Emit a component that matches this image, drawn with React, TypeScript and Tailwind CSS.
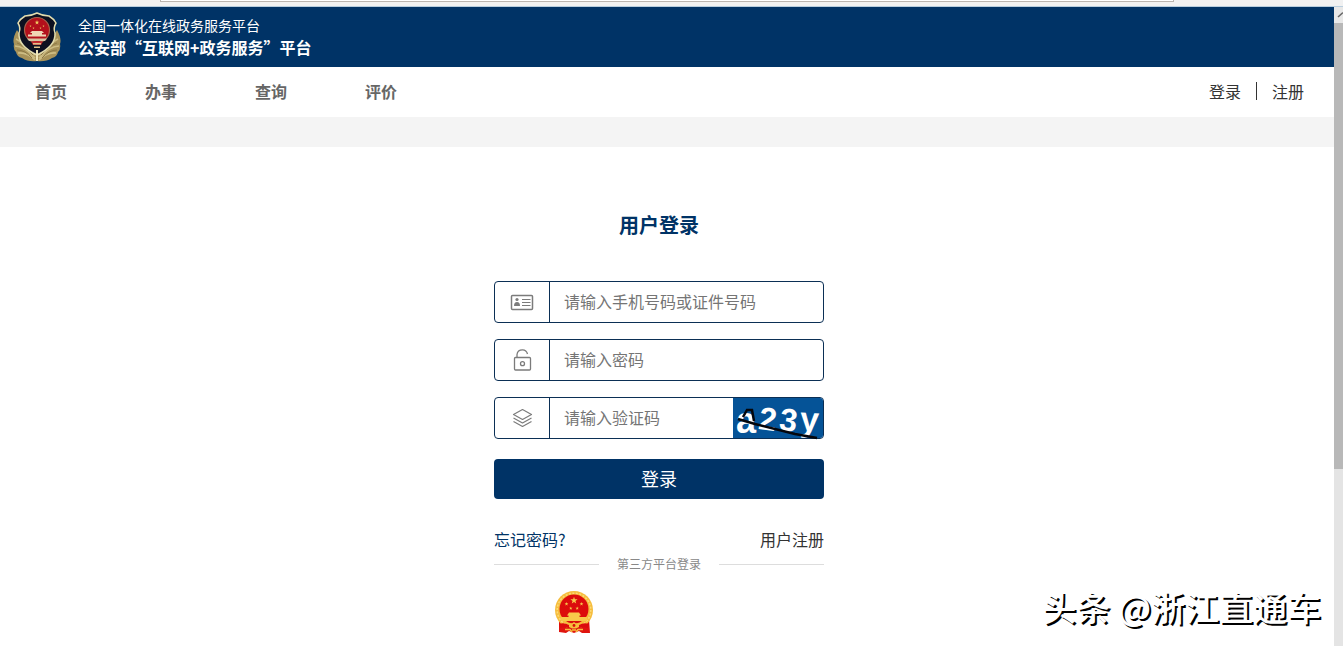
import type { ReactNode } from "react";

const navItems = ["首页", "办事", "查询", "评价"];

const STAR = "M0 -1 L0.24 -0.32 L0.95 -0.31 L0.38 0.12 L0.59 0.81 L0 0.4 L-0.59 0.81 L-0.38 0.12 L-0.95 -0.31 L-0.24 -0.32 Z";

const PoliceBadge = () => (
  <svg viewBox="0 0 48 50" className="h-[50px] w-12 shrink-0" aria-hidden="true">
    {/* Pine branches */}
    <path
      d="M4 18 Q-1 27 1 32 Q0 37 3 40 Q4 45 9 46 Q15 50 24 49 Q33 50 39 46 Q44 45 45 40 Q48 37 47 32 Q49 27 44 18 L38 28 L24 42 L10 28 Z"
      fill="#a8935a"
    />
    <path
      d="M3 27 Q11 31 22 43 M2 34 Q11 34 22 46 M5 41 Q14 40 22 48 M45 27 Q37 31 26 43 M46 34 Q37 34 26 46 M43 41 Q34 40 26 48"
      stroke="#cdbd84"
      strokeWidth="1.6"
      fill="none"
    />
    <path
      d="M4 31 Q11 33 20 43 M4 38 Q12 38 19 46 M44 31 Q37 33 28 43 M44 38 Q36 38 29 46"
      stroke="#8c7946"
      strokeWidth="1"
      fill="none"
    />
    {/* Shield */}
    <path
      d="M24 1 Q30 4 36 4 Q41 7 43 11 Q40 16 42 21 Q43 34 24 43 Q5 34 6 21 Q8 16 5 11 Q7 7 12 4 Q18 4 24 1 Z"
      fill="#0d1020"
      stroke="#e2dcae"
      strokeWidth="1.5"
    />
    <circle cx="24" cy="18" r="12.5" fill="#b3101c" stroke="#a9634a" strokeWidth="1.2" />
    <g fill="#f1ce62">
      <path d={STAR} transform="translate(24 10.5) scale(2.4)" />
      <path d={STAR} transform="translate(17.5 14) scale(1.1)" />
      <path d={STAR} transform="translate(30.5 14) scale(1.1)" />
      <path d={STAR} transform="translate(20.5 16) scale(1.1)" />
      <path d={STAR} transform="translate(27.5 16) scale(1.1)" />
    </g>
    <path d="M19 19 H29 L31 21 H29 V22.5 H33 V24.5 H15 V22.5 H19 V21 H17 Z" fill="#f0d5b4" />
    <path d="M14 26.5 H34 L32 29 H16 Z" fill="#d9c3a0" />
    <path d="M18 29.5 H30 L28 33 H20 Z" fill="#c22a30" />
    <path d="M20 31 H28 V32.5 H20 Z M21 34.5 H27 V36 H21 Z" fill="#e2c189" />
    <path d="M24 38 V49" stroke="#efe6b8" strokeWidth="2" />
  </svg>
);

const NationalEmblem = () => (
  <svg viewBox="0 0 40 43" className="h-[43px] w-10" aria-hidden="true">
    <path d="M5 28 L35 28 L36 42 L28 42 L25 40 L20 42 L15 40 L12 42 L5 41 Z" fill="#e0140f" />
    <circle cx="20" cy="19" r="19" fill="#f6bd3c" />
    <circle cx="20" cy="19" r="16.8" fill="none" stroke="#fbd978" strokeWidth="1.5" strokeDasharray="2 1.5" />
    <circle cx="20" cy="18" r="14.5" fill="#dc0c0c" />
    <g fill="#f8c84a">
      <path d={STAR} transform="translate(20 9.5) scale(3.8)" />
      <path d={STAR} transform="translate(12.5 13) scale(2)" />
      <path d={STAR} transform="translate(27.5 13) scale(2)" />
      <path d={STAR} transform="translate(16.8 17.3) scale(1.8)" />
      <path d={STAR} transform="translate(23.2 17.3) scale(1.8)" />
      <path d="M15 21.5 H25 L27 24.5 H25.5 V26 H33 V30 H7 V26 H14.5 V24.5 H13 Z" />
    </g>
    <path d="M5 33 Q10 31 15 34 H25 Q30 31 35 33 L34 37 Q28 35 24 38 H16 Q12 35 6 37 Z" fill="#dc0c0c" />
    <path d="M20 31 L22 32.5 L25 33 L25 36 L22 37.5 H18 L15 36 V33 L18 32.5 Z" fill="#f6bd3c" />
    <circle cx="20" cy="34.5" r="1.4" fill="#dc0c0c" />
    <path d="M11 38.5 H16 L18 41 M29 38.5 H24 L22 41 M18 39 H22" fill="none" stroke="#f6bd3c" strokeWidth="1.6" />
  </svg>
);

const IdCardIcon = () => (
  <svg viewBox="0 0 24 24" className="size-6" fill="none" stroke="#7b7b7b" strokeWidth="1.5" aria-hidden="true">
    <rect x="1.5" y="5.5" width="21" height="14" rx="1" />
    <circle cx="7" cy="9.5" r="1.6" fill="#7b7b7b" stroke="none" />
    <path d="M4 16 Q4 12 7 12 Q10 12 10 16 Z" fill="#7b7b7b" stroke="none" />
    <path d="M12 9.500 H20.500 M12 12.500 H20.500 M12 15.500 H20.500" strokeWidth="1.2" />
  </svg>
);

const UnlockIcon = () => (
  <svg viewBox="0 0 24 24" className="size-6" fill="none" stroke="#7b7b7b" strokeWidth="1.3" aria-hidden="true">
    <rect x="4.5" y="9.5" width="16" height="12.5" rx="1" />
    <path d="M7 9.5 V6.5 Q7.5 1.8 12.5 1.8 Q16.5 1.8 17.500 6" />
    <circle cx="12.5" cy="15.7" r="2" />
  </svg>
);

const LayersIcon = () => (
  <svg viewBox="0 0 24 24" className="size-6" fill="none" stroke="#7b7b7b" strokeWidth="1.2" strokeLinejoin="round" aria-hidden="true">
    <path d="M12.5 3.5 L21.5 8.5 L12.5 13.5 L3.5 8.5 Z" />
    <path d="M3.5 12 L12.5 17 L21.5 12" />
    <path d="M3.5 15.5 L12.5 20.5 L21.5 15.5" />
  </svg>
);

const Captcha = () => (
  <svg
    viewBox="0 0 90 40"
    className="h-10 w-[90px] shrink-0 overflow-visible rounded-r-[3px] bg-[#055397]"
    role="img"
    aria-label="验证码"
  >
    <g fill="#fff" className="font-['Liberation_Sans',sans-serif] font-bold">
      <text x="3" y="35" fontSize="36">a</text>
      <text x="26" y="32" fontSize="32" transform="rotate(8 34 20)">2</text>
      <text x="47" y="33" fontSize="32" transform="rotate(8 55 20)">3</text>
      <text x="67" y="33" fontSize="34" transform="rotate(3 75 25)">y</text>
    </g>
    <path d="M10 19 L14 12 L19 12 L21 23 M5 21 L22 26 L62 36 L84 40" fill="none" stroke="#05060b" strokeWidth="2.5" />
  </svg>
);

interface FieldProps {
  id: string;
  type: string;
  label: string;
  icon: ReactNode;
  children?: ReactNode;
}

const Field = ({ id, type, label, icon, children }: FieldProps) => (
  <div className="flex h-[42px] rounded border border-[#0b2f55]">
    <label
      htmlFor={id}
      aria-label={label}
      className="flex w-[55px] shrink-0 items-center justify-center border-r border-[#0b2f55]"
    >
      {icon}
    </label>
    <input
      id={id}
      type={type}
      placeholder={label}
      className="min-w-0 flex-1 px-[14px] pb-0.5 text-base text-[#333] outline-none placeholder:text-[#757575]"
    />
    {children}
  </div>
);

const Header = () => (
  <header className="flex h-[60px] items-center gap-[17px] bg-[#003366] pl-[13px] text-white">
    <PoliceBadge />
    <div>
      <p className="text-sm leading-5">全国一体化在线政务服务平台</p>
      <p className="text-base leading-6 font-bold">公安部“互联网+政务服务”平台</p>
    </div>
  </header>
);

const NavBar = () => (
  <nav className="flex h-[50px] items-center justify-between pr-[30px] pb-0.5 pl-[35px] text-base">
    <div className="flex gap-[78px] font-bold text-[#666]">
      {navItems.map((item) => (
        <a key={item} href="#">
          {item}
        </a>
      ))}
    </div>
    <div className="flex items-center text-[#333]">
      <a href="#" className="pr-[15px]">
        登录
      </a>
      <span className="h-[18px] w-px bg-[#333]" />
      <a href="#" className="pl-[15px]">
        注册
      </a>
    </div>
  </nav>
);

const LoginForm = () => (
  <form className="w-[330px]" onSubmit={(e) => e.preventDefault()}>
    <h1 className="text-center text-xl leading-8 font-bold text-[#003366]">用户登录</h1>
    <div className="mt-10 flex flex-col gap-4">
      <Field id="account" type="text" label="请输入手机号码或证件号码" icon={<IdCardIcon />} />
      <Field id="password" type="password" label="请输入密码" icon={<UnlockIcon />} />
      <Field id="code" type="text" label="请输入验证码" icon={<LayersIcon />}>
        <Captcha />
      </Field>
    </div>
    <button type="submit" className="mt-5 h-10 w-full rounded bg-[#003366] pb-0.5 text-lg text-white">
      登录
    </button>
    <div className="mt-7 flex justify-between text-base leading-6">
      <a href="#" className="text-[#003366]">
        忘记密码?
      </a>
      <a href="#" className="text-[#333]">
        用户注册
      </a>
    </div>
    <div className="mt-[5px] flex items-center gap-[18px] text-xs text-[#888]">
      <span className="h-px flex-1 bg-[#ddd]" />
      第三方平台登录
      <span className="h-px flex-1 bg-[#ddd]" />
    </div>
    <button type="button" aria-label="国家政务服务平台登录" className="mt-[19px] ml-[60px] block">
      <NationalEmblem />
    </button>
  </form>
);

const ScrollBar = () => (
  <div className="flex w-[9px] shrink-0 flex-col overflow-hidden bg-[#e4e4e4]" aria-hidden="true">
    <div className="h-4 bg-[#e8e8e8]">
      <svg viewBox="0 0 9 16" className="h-4 w-[9px]" fill="none" stroke="#666" strokeWidth="1.5">
        <path d="M4 10 L9 5.5" />
      </svg>
    </div>
    <div className="h-[446px] bg-[#b8b8b8]" />
  </div>
);

export default function App() {
  return (
    <div
      lang="zh-CN"
      className="relative flex min-h-screen flex-col bg-white font-['Noto_Sans_CJK_SC',sans-serif]"
    >
      {/* Bottom edge of the browser toolbar */}
      <div className="flex h-[7px] items-start border-b border-[#b9cede] bg-[#f1f1f1]">
        <div className="mr-[169px] ml-[160px] h-[2px] flex-1 border-x border-b border-[#bbb5b0] bg-white" />
      </div>
      <div className="flex flex-1">
        <div className="min-w-0 flex-1">
          <Header />
          <NavBar />
          <div className="h-[30px] bg-[#f4f4f4]" />
          <main className="flex justify-center pt-[62px] pr-4">
            <LoginForm />
          </main>
        </div>
        <ScrollBar />
      </div>
      <div className="absolute right-[22px] bottom-[14px] text-[34px] leading-[50px] font-medium text-white [text-shadow:2px_2px_0_#000]">
        头条 @浙江直通车
      </div>
    </div>
  );
}
